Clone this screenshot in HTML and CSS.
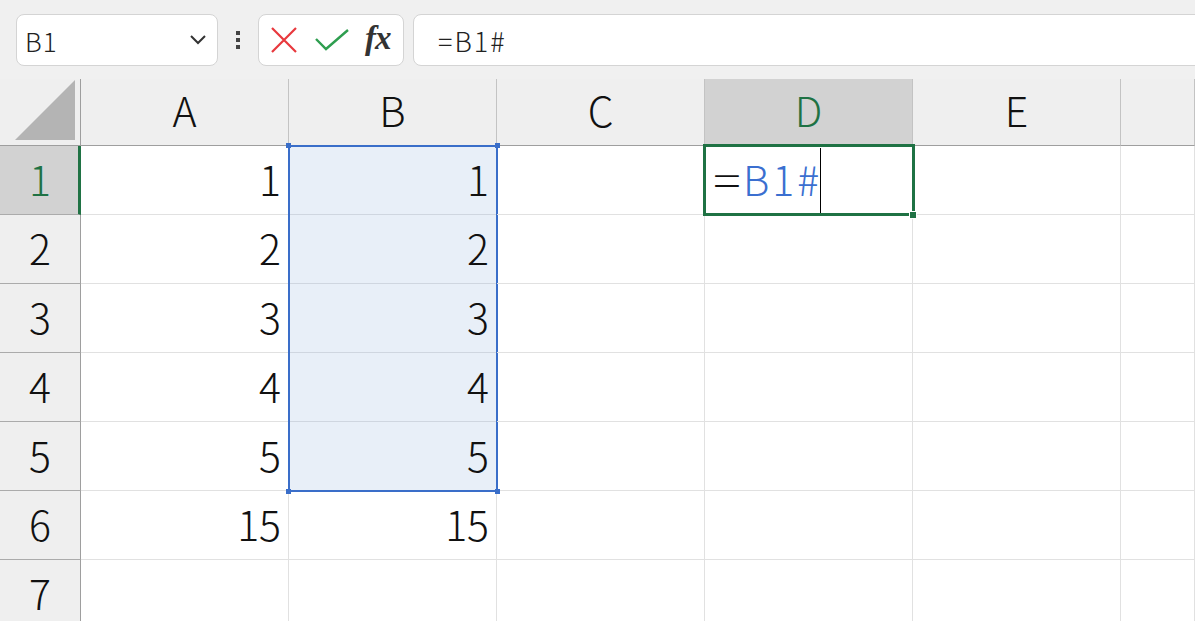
FILE: index.html
```html
<!DOCTYPE html>
<html lang="ja">
<head>
    <meta charset="UTF-8">
    <meta name="viewport" content="width=device-width, initial-scale=1.0">
    <title>Book1</title>
    <link rel="stylesheet" href="styles.css">
</head>
<body>
    <div class="toolbar">
        <div class="namebox">
            <span>B1</span>
            <svg width="18" height="12" viewBox="0 0 18 12"><polyline points="2,2 9,9 16,2" fill="none" stroke="#333" stroke-width="2"/></svg>
        </div>
        <div class="dots"><i></i><i></i><i></i></div>
        <div class="fxbox">
            <svg width="26" height="26" viewBox="0 0 26 26"><path d="M1 1 L25 25 M25 1 L1 25" stroke="#e8383d" stroke-width="2.2" fill="none"/></svg>
            <svg width="34" height="24" viewBox="0 0 34 24"><polyline points="1,11 11,21 33,2" stroke="#2e9e4f" stroke-width="2.4" fill="none"/></svg>
            <span class="fx">fx</span>
        </div>
        <div class="formula">=B1#</div>
    </div>

    <div class="sheet">
        <div class="corner"><svg width="62" height="62" viewBox="0 0 62 62"><polygon points="60,0 60,60 0,60" fill="#b4b4b4"/></svg></div>
        <div class="colhead">A</div>
        <div class="colhead">B</div>
        <div class="colhead">C</div>
        <div class="colhead active">D</div>
        <div class="colhead">E</div>
        <div class="colhead"></div>

        <div class="rowhead active">1</div>
        <div class="cell num">1</div>
        <div class="cell num sel first">1<i class="h tl"></i><i class="h tr"></i></div>
        <div class="cell"></div>
        <div class="cell edit"><span class="eq">=</span><span class="ref">B1#</span><span class="caret"></span><i class="fill"></i></div>
        <div class="cell"></div>
        <div class="cell"></div>

        <div class="rowhead">2</div>
        <div class="cell num">2</div>
        <div class="cell num sel">2</div>
        <div class="cell"></div>
        <div class="cell"></div>
        <div class="cell"></div>
        <div class="cell"></div>

        <div class="rowhead">3</div>
        <div class="cell num">3</div>
        <div class="cell num sel">3</div>
        <div class="cell"></div>
        <div class="cell"></div>
        <div class="cell"></div>
        <div class="cell"></div>

        <div class="rowhead">4</div>
        <div class="cell num">4</div>
        <div class="cell num sel">4</div>
        <div class="cell"></div>
        <div class="cell"></div>
        <div class="cell"></div>
        <div class="cell"></div>

        <div class="rowhead">5</div>
        <div class="cell num">5</div>
        <div class="cell num sel last">5<i class="h bl"></i><i class="h br"></i></div>
        <div class="cell"></div>
        <div class="cell"></div>
        <div class="cell"></div>
        <div class="cell"></div>

        <div class="rowhead">6</div>
        <div class="cell num">15</div>
        <div class="cell num">15</div>
        <div class="cell"></div>
        <div class="cell"></div>
        <div class="cell"></div>
        <div class="cell"></div>

        <div class="rowhead">7</div>
        <div class="cell"></div>
        <div class="cell"></div>
        <div class="cell"></div>
        <div class="cell"></div>
        <div class="cell"></div>
        <div class="cell"></div>
    </div>
</body>
</html>
```

FILE: styles.css
```css
body {
    margin: 0;
    padding: 0;
    background: #fff;
    font-family: "Noto Sans CJK JP", "Noto Sans", sans-serif;
    color: #111;
    overflow: hidden;
}

.toolbar {
    height: 79px;
    background: #f0f0f0;
    display: flex;
    align-items: center;
    padding: 0 0 0 16px;
    box-sizing: border-box;
}

.namebox {
    width: 202px;
    height: 52px;
    box-sizing: border-box;
    background: #fff;
    border: 1px solid #d4d4d4;
    border-radius: 8px;
    display: flex;
    align-items: center;
    justify-content: space-between;
    padding: 0 10px 0 8px;
    font-size: 26px;
    font-weight: 300;
    color: #222;
}

.namebox span {
    padding-top: 2px;
    letter-spacing: 1px;
}

.dots {
    width: 40px;
    display: flex;
    flex-direction: column;
    align-items: center;
    gap: 3px;
}

.dots i {
    width: 4px;
    height: 4px;
    background: #444;
}

.fxbox {
    width: 146px;
    height: 52px;
    box-sizing: border-box;
    background: #fff;
    border: 1px solid #d4d4d4;
    border-radius: 8px;
    display: flex;
    align-items: center;
    padding: 0 8px 0 12px;
    gap: 18px;
}

.fx {
    font-family: "Liberation Serif", "DejaVu Serif", serif;
    font-style: italic;
    font-weight: bold;
    font-size: 33px;
    color: #333;
    margin: -3px 0 0 -2px;
    letter-spacing: -1px;
}

.formula {
    flex: 1;
    margin-left: 9px;
    margin-right: -12px;
    height: 52px;
    box-sizing: border-box;
    background: #fff;
    border: 1px solid #d4d4d4;
    border-radius: 8px;
    display: flex;
    align-items: center;
    padding: 2px 0 0 24px;
    font-size: 27px;
    font-weight: 300;
    letter-spacing: 2px;
    color: #222;
}

.sheet {
    display: grid;
    grid-template-columns: 81px repeat(5, 208px) 1fr;
    grid-template-rows: 67px repeat(7, 69px);
    font-weight: 300;
}

.corner {
    background: #efefef;
    border-right: 1px solid #9e9e9e;
    border-bottom: 1px solid #9e9e9e;
    display: flex;
    align-items: flex-end;
    justify-content: flex-end;
    padding: 0 3px 3px 0;
}

.colhead {
    background: #efefef;
    border-right: 1px solid #c3c3c3;
    border-bottom: 1px solid #9e9e9e;
    display: flex;
    align-items: center;
    justify-content: center;
    font-size: 41px;
    color: #111;
    padding-bottom: 6px;
}

.colhead.active {
    background: #d2d2d2;
    color: #1f7244;
}

.rowhead {
    background: #efefef;
    border-right: 1px solid #9e9e9e;
    border-bottom: 1px solid #ababab;
    display: flex;
    align-items: center;
    justify-content: center;
    font-size: 41px;
    color: #111;
    padding-bottom: 4px;
}

.rowhead.active {
    background: #d2d2d2;
    color: #1f7244;
    border-right: 3px solid #1f7244;
    padding-left: 2px;
}

.cell {
    border-right: 1px solid #e1e1e1;
    border-bottom: 1px solid #e1e1e1;
    font-size: 41px;
    display: flex;
    align-items: center;
    position: relative;
    padding-bottom: 4px;
}

.num {
    justify-content: flex-end;
    padding-right: 7px;
}

/* selected range B1:B5 */
.sel {
    background: #e8eff8;
    border-bottom-color: #cfd6e0;
}

.sel::before {
    content: "";
    position: absolute;
    top: 0;
    bottom: -1px;
    left: -1px;
    right: -2px;
    border-left: 2px solid #3a6ec9;
    border-right: 2px solid #3a6ec9;
    pointer-events: none;
}

.sel.first::before {
    top: -1px;
    border-top: 2px solid #3a6ec9;
}

.sel.last::before {
    bottom: -2px;
    border-bottom: 2px solid #3a6ec9;
}

.h {
    position: absolute;
    width: 5px;
    height: 5px;
    background: #3a6ec9;
    z-index: 2;
}

.h.tl { left: -3px; top: -3px; }
.h.tr { right: -4px; top: -3px; }
.h.bl { left: -3px; bottom: -4px; }
.h.br { right: -4px; bottom: -4px; }

/* active cell D1 */
.edit {
    padding-left: 9px;
    padding-bottom: 0;
}

.edit::before {
    content: "";
    position: absolute;
    top: -2px;
    left: -2px;
    right: -3px;
    bottom: -2px;
    border: 3px solid #1f7244;
    pointer-events: none;
    z-index: 1;
}

.edit .eq {
    color: #111;
    transform: scaleX(1.25);
    margin: 0 5px 4px 2px;
}

.edit .ref {
    color: #3b6fd0;
    letter-spacing: 3px;
    margin-bottom: 4px;
}

.caret {
    width: 1px;
    align-self: stretch;
    background: #000;
    margin: 2px 0 1px -2px;
}

.fill {
    position: absolute;
    right: -5px;
    bottom: -5px;
    width: 6px;
    height: 6px;
    background: #1f7244;
    border: 1px solid #fff;
    z-index: 2;
}
```
